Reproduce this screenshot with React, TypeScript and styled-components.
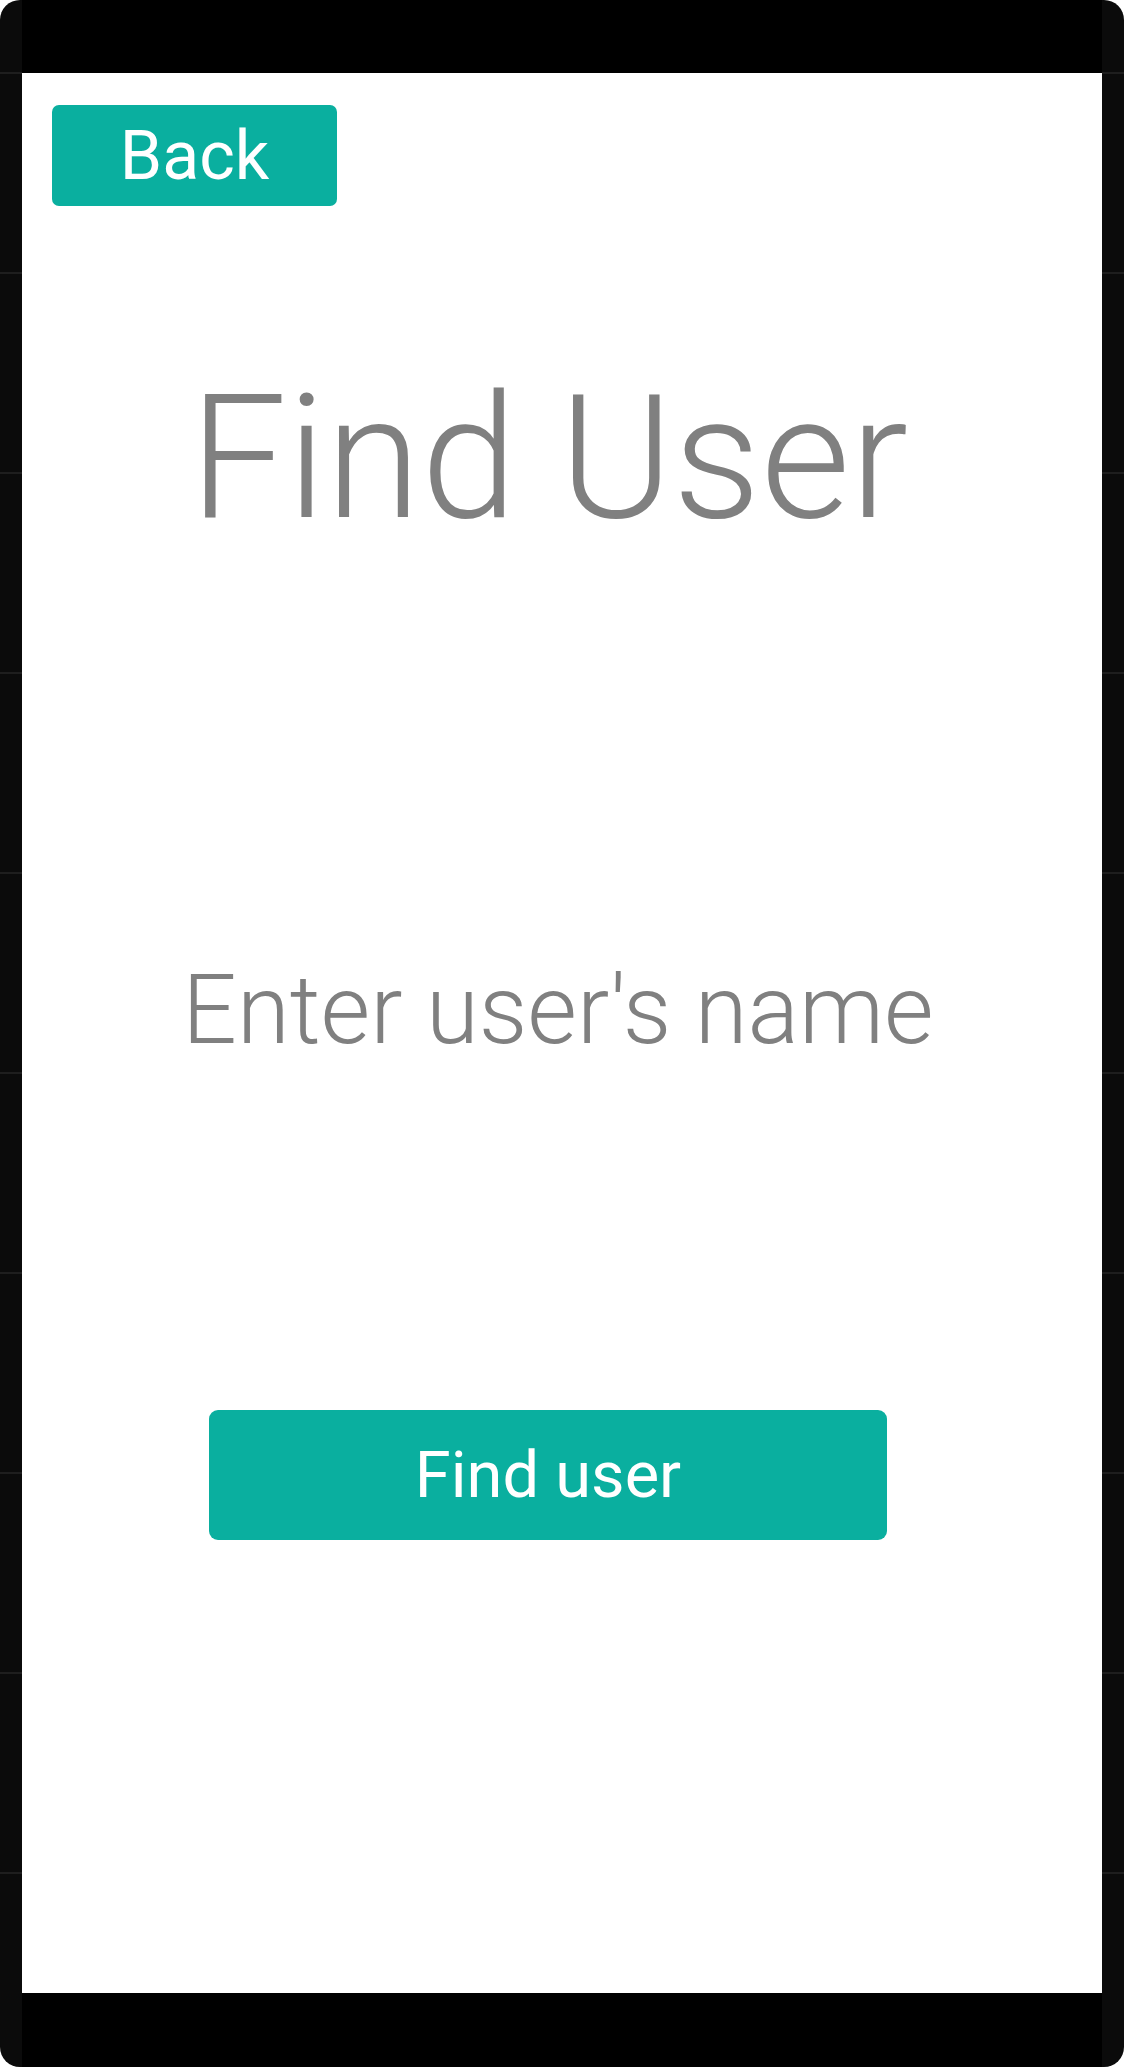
import React from 'react';
import { createGlobalStyle, styled } from 'styled-components';

const GlobalStyle = createGlobalStyle`
  html, body {
    margin: 0;
    padding: 0;
    background: #ffffff;
  }
  * {
    box-sizing: border-box;
  }
`;

const Frame = styled.div`
  display: grid;
  grid-template-columns: 22px 1fr 22px;
  width: 1124px;
  height: 2067px;
  border-radius: 20px;
  overflow: hidden;
  background: #0b0b0b;
`;

const Bezel = styled.div`
  background: repeating-linear-gradient(
    to bottom,
    transparent 0,
    transparent 72px,
    #1e1e1e 72px,
    #1e1e1e 74px,
    transparent 74px,
    transparent 200px
  );
`;

const Device = styled.div`
  display: flex;
  flex-direction: column;
`;

const Bar = styled.div<{ $height: number }>`
  height: ${(p) => p.$height}px;
  background: #000000;
`;

const Screen = styled.div`
  display: flex;
  flex-direction: column;
  align-items: center;
  height: 1920px;
  padding: 32px 30px 0;
  background: #ffffff;
  font-family: Roboto, 'Liberation Sans', sans-serif;
`;

const Button = styled.button<{ $width: number; $height: number; $radius: number; $size: number }>`
  display: flex;
  align-items: center;
  justify-content: center;
  width: ${(p) => p.$width}px;
  height: ${(p) => p.$height}px;
  padding: 0;
  border: none;
  border-radius: ${(p) => p.$radius}px;
  background: #0aaf9f;
  color: #ffffff;
  font-family: Roboto, 'Liberation Sans', sans-serif;
  font-size: ${(p) => p.$size}px;
  font-weight: 400;
  line-height: 1;
  cursor: pointer;
`;

const BackButton = styled(Button)`
  align-self: flex-start;
`;

const FindButton = styled(Button)`
  align-self: flex-start;
  margin: 352px 0 0 157px;
`;

const Title = styled.h1`
  margin: 166px 26px 0 0;
  color: #808080;
  font-size: 173px;
  font-weight: 300;
  line-height: 1;
`;

const NameInput = styled.input`
  width: 100%;
  height: 96px;
  margin-top: 417px;
  padding: 0 8px 0 0;
  border: none;
  outline: none;
  background: transparent;
  text-align: center;
  color: #808080;
  font-family: Roboto, 'Liberation Sans', sans-serif;
  font-size: 96px;
  font-weight: 300;
  &::placeholder {
    color: #808080;
    opacity: 1;
  }
`;

export default function App() {
  return (
    <>
      <GlobalStyle />
      <Frame>
        <Bezel />
        <Device>
          <Bar $height={73} />
          <Screen>
            <BackButton $width={285} $height={101} $radius={7} $size={68}>
              Back
            </BackButton>
            <Title>Find User</Title>
            <NameInput placeholder="Enter user's name" />
            <FindButton $width={678} $height={130} $radius={9} $size={65}>
              Find user
            </FindButton>
          </Screen>
          <Bar $height={74} />
        </Device>
        <Bezel />
      </Frame>
    </>
  );
}
